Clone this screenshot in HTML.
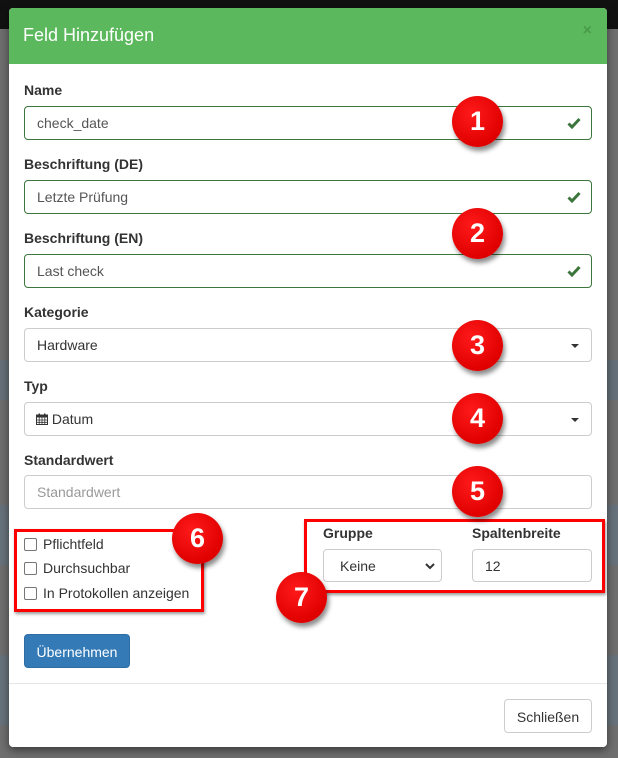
<!DOCTYPE html>
<html><head><meta charset="utf-8"><style>
*{box-sizing:border-box}
body{margin:0;width:618px;height:758px;overflow:hidden;background:#6f6f6f;font-family:"Liberation Sans",sans-serif;position:relative}
.top{position:absolute;left:0;top:0;width:618px;height:29px;background:#111}
.band{position:absolute;left:0;width:618px;background:#66707a}
.modal{position:absolute;left:9px;top:8px;width:598px;height:739px;background:#fff;border-radius:4px;overflow:hidden;box-shadow:0 3px 9px rgba(0,0,0,.5)}
.hd{height:56px;background:#5cb85c;color:#fff;font-size:18px;padding:17px 0 0 14px}
.x{position:absolute;right:15px;top:14px;color:#3d8a3d;font-weight:bold;font-size:16px;opacity:.6}
.lbl{position:absolute;left:15px;font-weight:bold;font-size:14px;color:#333}
.inp{position:absolute;left:15px;width:568px;height:34px;border:1px solid #ccc;border-radius:4px;font-size:14px;color:#555;padding:8px 12px}
.ok{border-color:#3c763d}
.chk{position:absolute;right:10px;top:10px}
.caret{position:absolute;right:12px;top:15px;border-left:4px solid transparent;border-right:4px solid transparent;border-top:4px solid #333}
.b{position:absolute;width:51px;height:51px;border-radius:50%;background:radial-gradient(circle at 40% 35%,#ff1a1a,#e00000 70%,#c00);color:#fff;font-weight:bold;font-size:27px;text-align:center;line-height:51px;box-shadow:2px 4px 5px rgba(0,0,0,.45);z-index:5}
.rb{position:absolute;border:3px solid #f00;box-shadow:1px 2px 3px rgba(0,0,0,.4)}
.cb{position:absolute;left:15px;font-size:14px;color:#333}
.cb span{display:inline-block;width:13px;height:13px;border:1px solid #767676;border-radius:2px;vertical-align:-2px;margin-right:6px}
.btn{position:absolute;border-radius:4px;font-size:14px;text-align:center}
</style></head><body>
<div class="top"></div>
<div class="band" style="top:360px;height:40px"></div>
<div class="band" style="top:505px;height:60px;background:#68727c"></div>
<div class="band" style="top:655px;height:70px;background:#68727c"></div>
<div class="modal">
<div class="hd">Feld Hinzufügen</div><div class="x">×</div>
<div class="lbl" style="top:74px">Name</div>
<div class="inp ok" style="top:98px">check_date<svg class="chk" width="14" height="12" viewBox="0 0 14 12"><path d="M1.5 6.5L5 10L12.5 2" fill="none" stroke="#3c763d" stroke-width="3"/></svg></div>
<div class="lbl" style="top:148px">Beschriftung (DE)</div>
<div class="inp ok" style="top:172px">Letzte Prüfung<svg class="chk" width="14" height="12" viewBox="0 0 14 12"><path d="M1.5 6.5L5 10L12.5 2" fill="none" stroke="#3c763d" stroke-width="3"/></svg></div>
<div class="lbl" style="top:222px">Beschriftung (EN)</div>
<div class="inp ok" style="top:246px">Last check<svg class="chk" width="14" height="12" viewBox="0 0 14 12"><path d="M1.5 6.5L5 10L12.5 2" fill="none" stroke="#3c763d" stroke-width="3"/></svg></div>
<div class="lbl" style="top:296px">Kategorie</div>
<div class="inp" style="top:320px;color:#333">Hardware<span class="caret"></span></div>
<div class="lbl" style="top:370px">Typ</div>
<div class="inp" style="top:394px;color:#333;padding-left:11px"><svg width="12" height="12" viewBox="0 0 12 12" style="vertical-align:-1px"><rect x="0.5" y="2" width="11" height="9.5" fill="none" stroke="#333"/><rect x="0.5" y="2" width="11" height="2.5" fill="#333"/><rect x="2.5" y="0.5" width="1.5" height="3" fill="#333"/><rect x="8" y="0.5" width="1.5" height="3" fill="#333"/><path d="M0.5 7H11.5M0.5 9.3H11.5M3.2 4.5V11.5M6 4.5V11.5M8.8 4.5V11.5" stroke="#333" stroke-width=".8"/></svg> Datum<span class="caret"></span></div>
<div class="lbl" style="top:444px">Standardwert</div>
<div class="inp" style="top:467px;color:#999">Standardwert</div>
<div class="cb" style="top:528px"><span></span>Pflichtfeld</div>
<div class="cb" style="top:552px"><span></span>Durchsuchbar</div>
<div class="cb" style="top:577px"><span></span>In Protokollen anzeigen</div>
<div class="lbl" style="left:314px;top:517px">Gruppe</div>
<div class="lbl" style="left:463px;top:517px">Spaltenbreite</div>
<div class="inp" style="left:314px;top:541px;width:119px;height:33px;color:#333;padding-left:16px">Keine<svg width="10" height="7" viewBox="0 0 10 7" style="position:absolute;right:6px;top:13px"><path d="M1 1L5 5L9 1" fill="none" stroke="#333" stroke-width="2"/></svg></div>
<div class="inp" style="left:463px;top:541px;width:120px;height:33px;color:#333">12</div>
<div class="btn" style="left:15px;top:626px;width:106px;height:34px;background:#337ab7;border:1px solid #2e6da4;color:#fff;padding-top:9px">Übernehmen</div>
<div style="position:absolute;left:0;top:675px;width:598px;border-top:1px solid #e5e5e5"></div>
<div class="btn" style="left:495px;top:691px;width:88px;height:34px;border:1px solid #ccc;color:#333;padding-top:9px">Schließen</div>
</div>
<div class="rb" style="left:14px;top:529px;width:190px;height:83px"></div>
<div class="rb" style="left:304px;top:519px;width:301px;height:74px"></div>
<div class="b" style="left:452px;top:96px">1</div>
<div class="b" style="left:452px;top:208px">2</div>
<div class="b" style="left:452px;top:320px">3</div>
<div class="b" style="left:452px;top:393px">4</div>
<div class="b" style="left:452px;top:466px">5</div>
<div class="b" style="left:172px;top:513px">6</div>
<div class="b" style="left:276px;top:572px">7</div>
</body></html>
